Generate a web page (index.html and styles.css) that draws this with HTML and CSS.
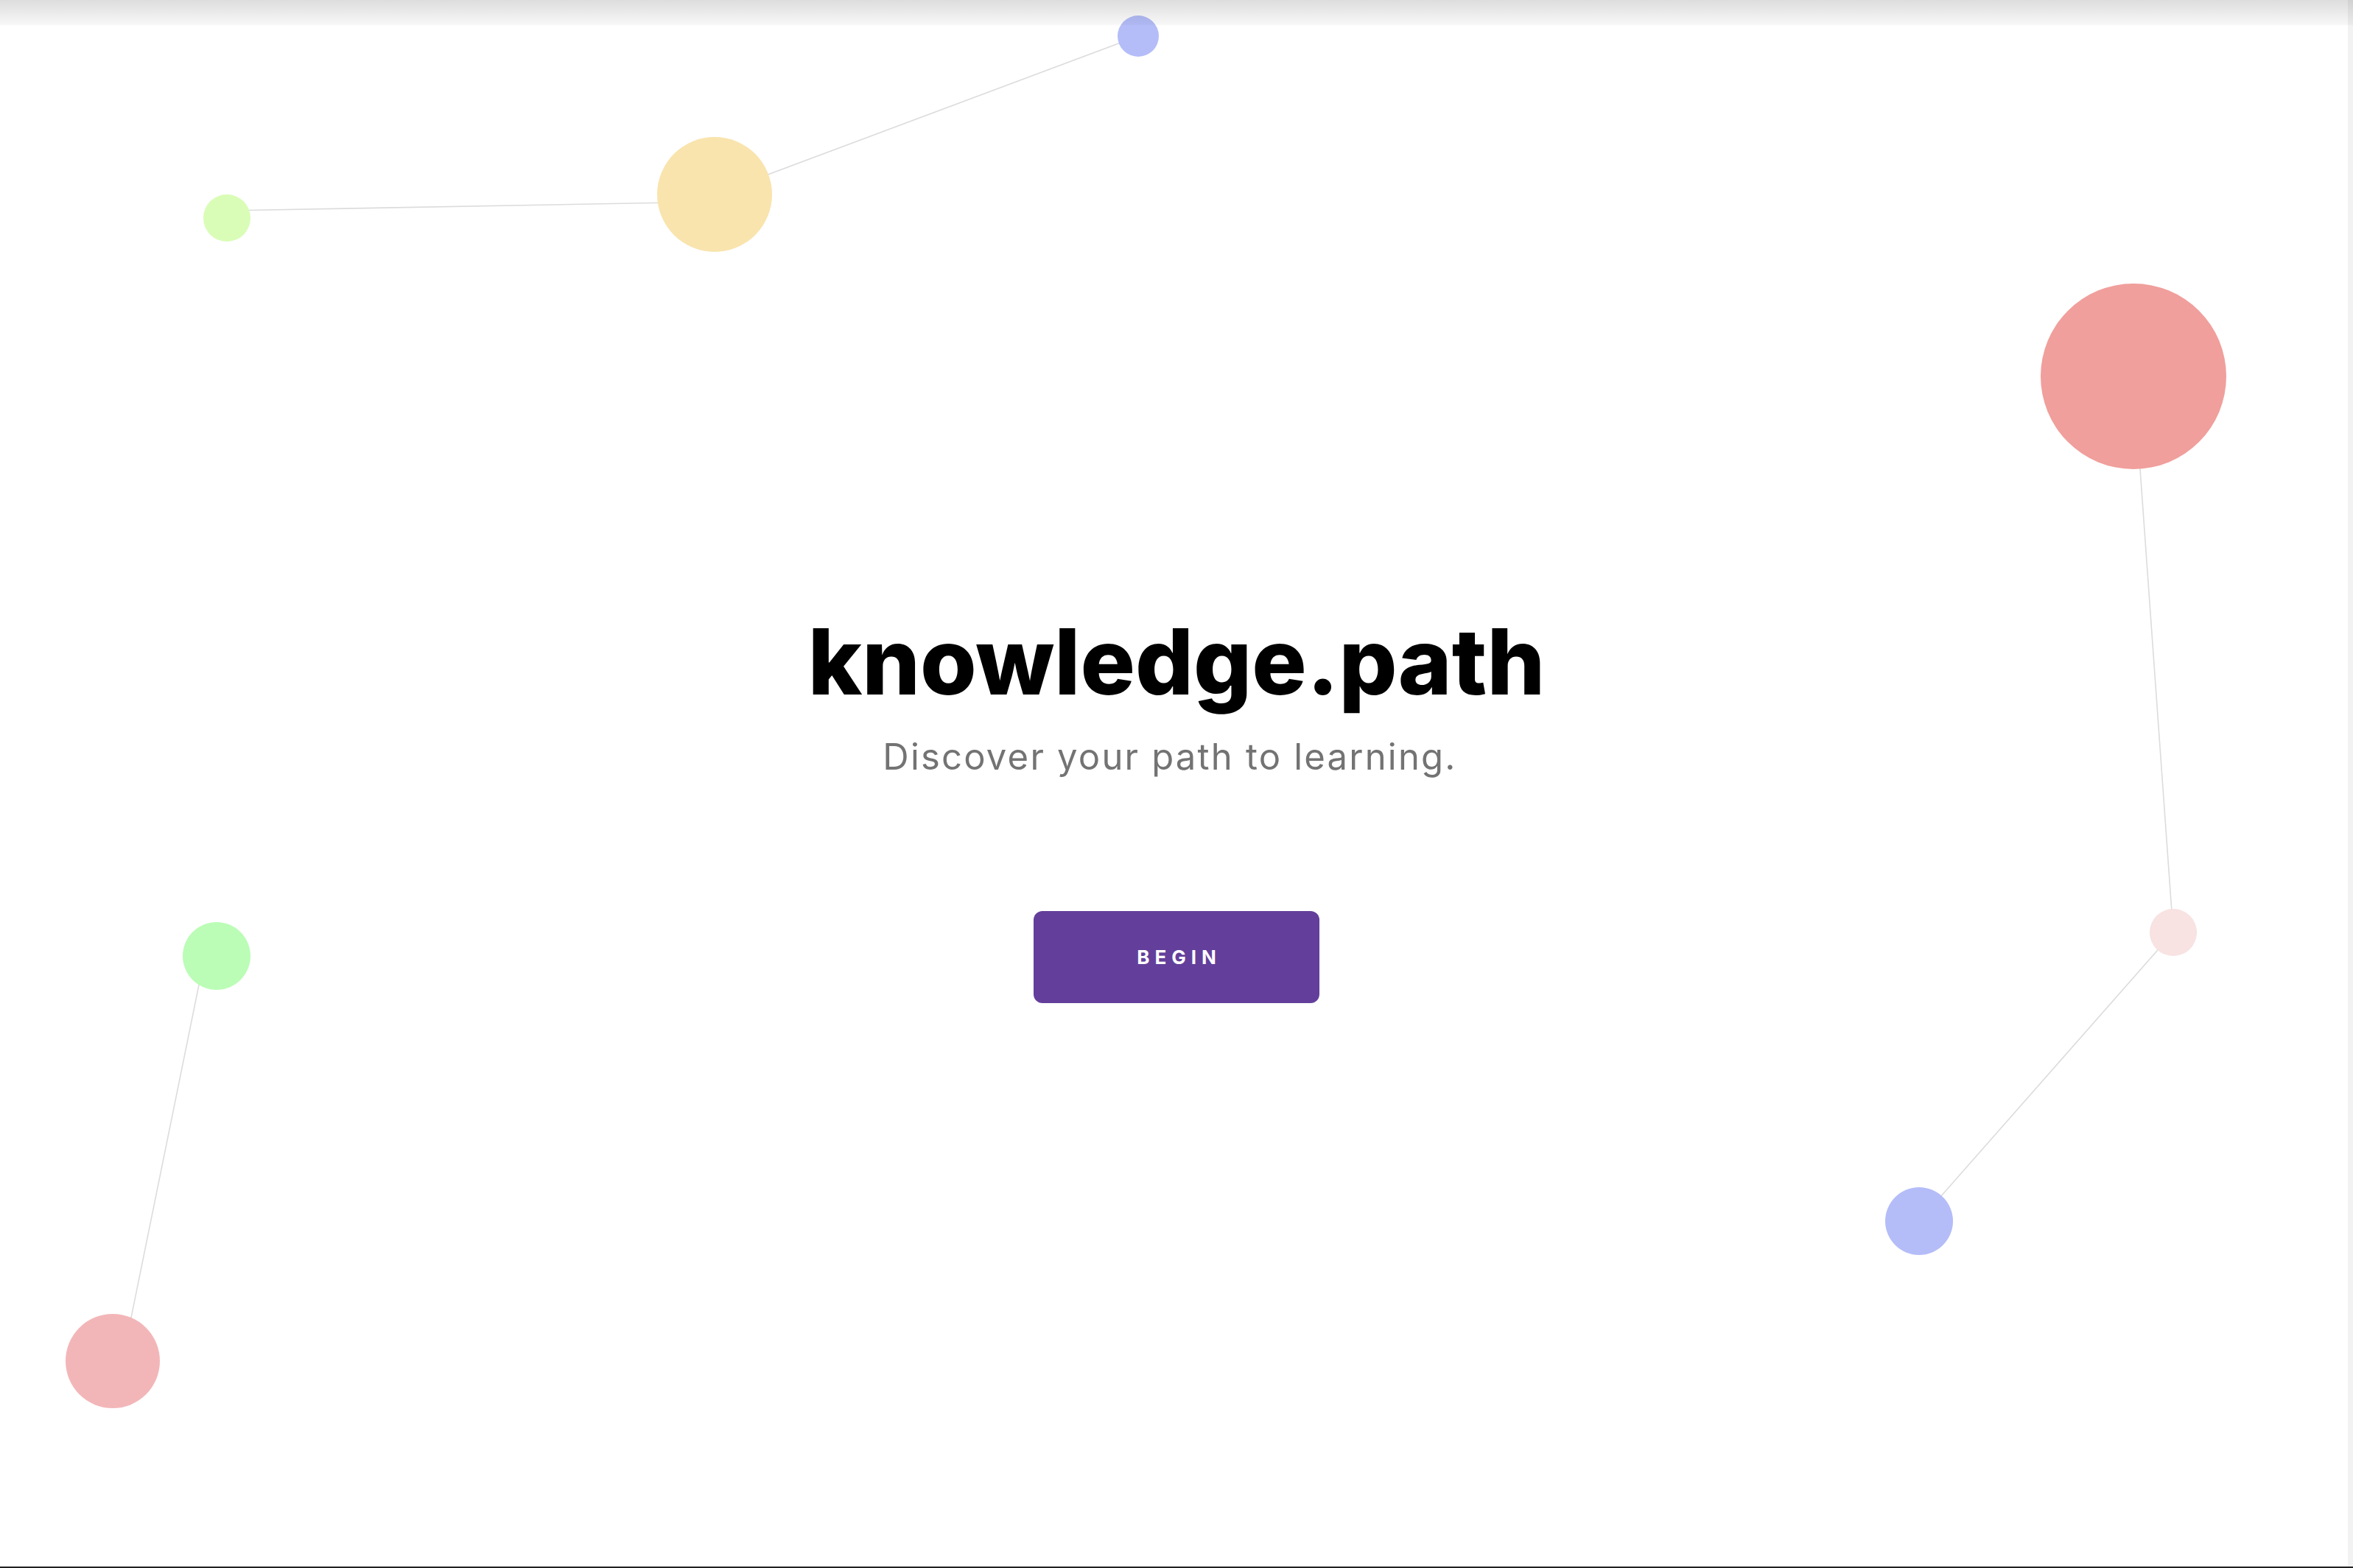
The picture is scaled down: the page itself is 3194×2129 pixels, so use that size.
FILE: index.html
```html
<!DOCTYPE html>
<html lang="en">
<head>
<meta charset="utf-8">
<title>knowledge.path</title>
<link rel="stylesheet" href="styles.css">
</head>
<body>
<div class="page">
  <svg class="network" width="3194" height="2129" viewBox="0 0 3194 2129" aria-hidden="true">
    <g class="links">
      <line x1="308" y1="286" x2="970" y2="274"/>
      <line x1="970" y1="264" x2="1545" y2="49"/>
      <line x1="2896" y1="511" x2="2950" y2="1266"/>
      <line x1="2950" y1="1266" x2="2605" y2="1658"/>
      <line x1="278" y1="1298" x2="166" y2="1848"/>
    </g>
    <g class="nodes">
      <circle class="n-blue" cx="1545" cy="49" r="28"/>
      <circle class="n-yellow" cx="970" cy="264" r="78"/>
      <circle class="n-lime" cx="308" cy="296" r="32"/>
      <circle class="n-red" cx="2896" cy="511" r="126"/>
      <circle class="n-blush" cx="2950" cy="1266" r="32"/>
      <circle class="n-blue" cx="2605" cy="1658" r="46"/>
      <circle class="n-green" cx="294" cy="1298" r="46"/>
      <circle class="n-pink" cx="153" cy="1848" r="64"/>
    </g>
  </svg>

  <main class="hero">
    <h1 class="title">knowledge.path</h1>
    <p class="tagline">Discover your path to learning.</p>
    <button class="begin" type="button">BEGIN</button>
  </main>

  <div class="edge-shade"></div>
  <div class="scroll-track"></div>
  <div class="bottom-rule"></div>
</div>
</body>
</html>
```

FILE: styles.css
```css
html, body {
  margin: 0;
  padding: 0;
  background: #ffffff;
}

body {
  font-family: Inter, "Noto Sans", "Liberation Sans", sans-serif;
  overflow: hidden;
}

.page {
  position: relative;
  width: 3194px;
  height: 2129px;
  overflow: hidden;
  background: #ffffff;
}

.network {
  position: absolute;
  left: 0;
  top: 0;
  display: block;
}

.links line {
  stroke: #dcdcdc;
  stroke-width: 1.6;
}

.n-blue   { fill: #b4bdf8; }
.n-yellow { fill: #f9e4ae; }
.n-lime   { fill: #d9fdb6; }
.n-red    { fill: #f09f9c; }
.n-blush  { fill: #f8e2e2; }
.n-green  { fill: #bbfdb6; }
.n-pink   { fill: #f3b6b8; }

.hero {
  position: relative;
  display: flex;
  flex-direction: column;
  align-items: center;
  padding-top: 836px;
}

.title {
  margin: 0;
  font-family: Inter, "Noto Sans", sans-serif;
  font-weight: 800;
  font-size: 124px;
  line-height: 1;
  letter-spacing: 0;
  color: #000000;
}

.tagline {
  margin: 43px 0 0;
  padding-right: 18px;
  font-family: Inter, "Noto Sans", sans-serif;
  font-weight: 400;
  font-size: 49px;
  line-height: 1;
  letter-spacing: 2.2px;
  color: #737373;
}

.begin {
  margin-top: 185px;
  width: 388px;
  height: 125px;
  border: none;
  border-radius: 12px;
  background: #633f9b;
  color: #ffffff;
  font-family: Inter, "Noto Sans", sans-serif;
  font-weight: 700;
  font-size: 26px;
  letter-spacing: 7px;
  padding: 0 0 0 7px;
  cursor: pointer;
}

.edge-shade {
  position: absolute;
  left: 0;
  top: 0;
  width: 100%;
  height: 35px;
  background: linear-gradient(rgba(0,0,0,0.135), rgba(0,0,0,0.03) 33px, rgba(0,0,0,0));
  pointer-events: none;
}

.scroll-track {
  position: absolute;
  right: 0;
  top: 0;
  width: 7px;
  height: 100%;
  background: rgba(0,0,0,0.05);
}

.bottom-rule {
  position: absolute;
  left: 0;
  bottom: 0;
  width: 100%;
  height: 2px;
  background: #222222;
}
```
